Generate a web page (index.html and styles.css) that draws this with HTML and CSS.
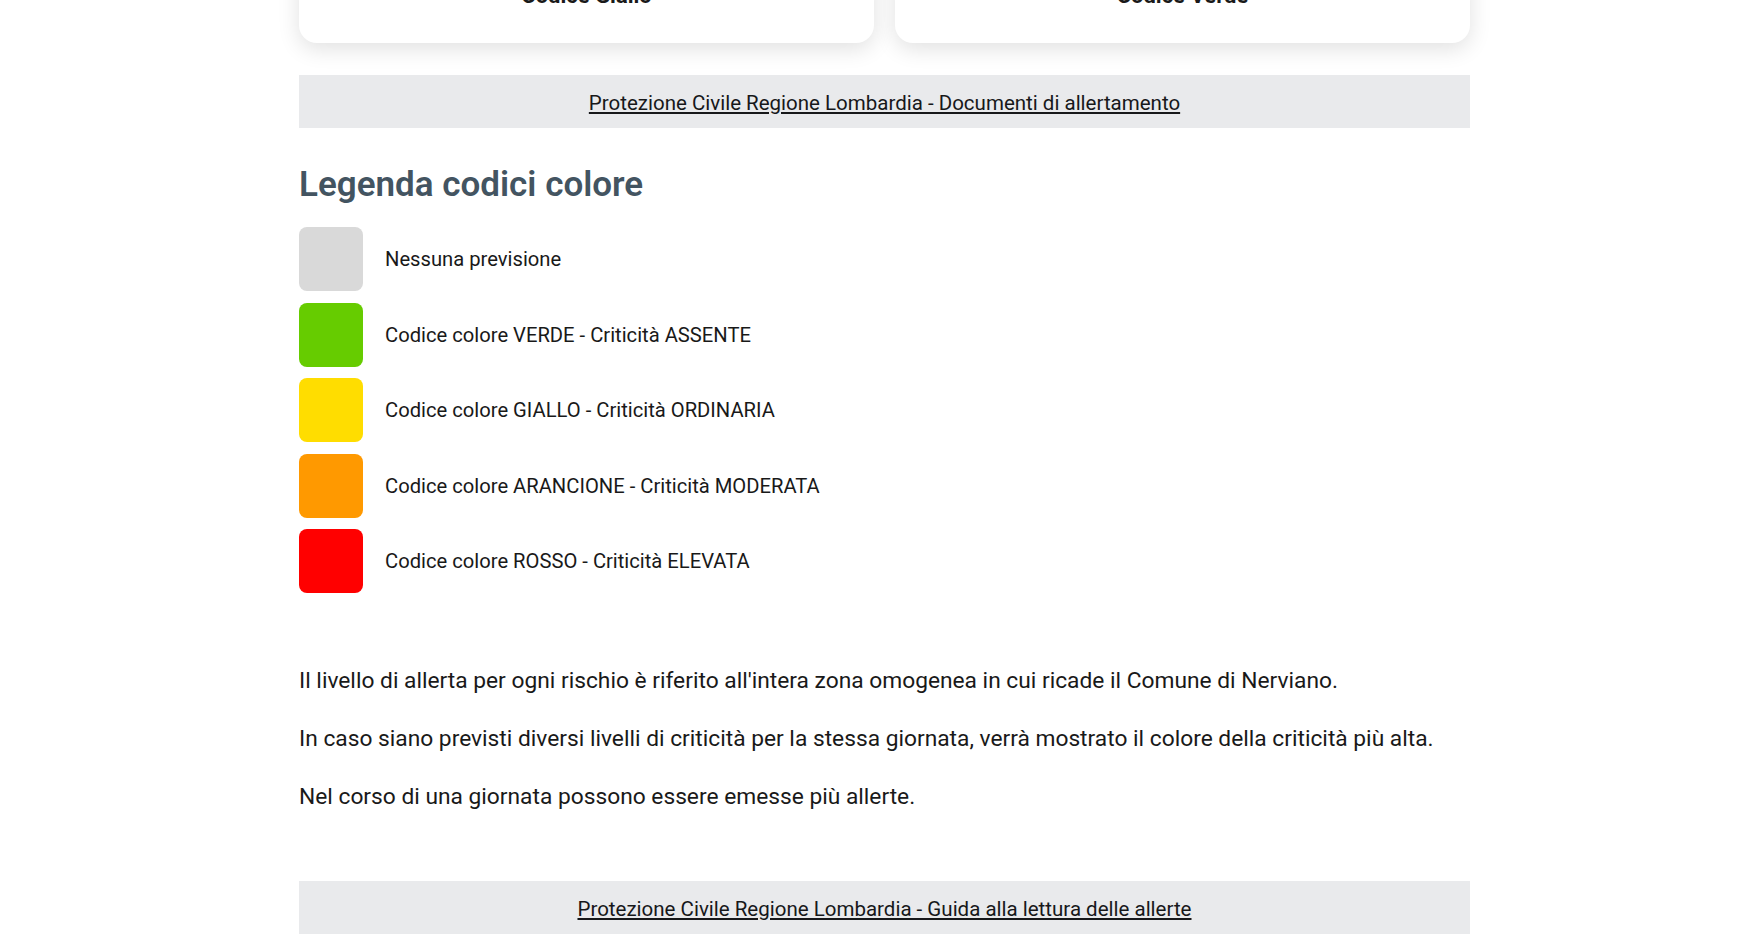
FILE: index.html
```html
<!DOCTYPE html>
<html lang="it">
<head>
  <meta charset="UTF-8">
  <title>Allerte meteo - Comune di Nerviano</title>
  <link rel="stylesheet" href="styles.css">
</head>
<body>

  <main class="page">

    <div class="cards">
      <div class="card">
        <h3 class="card-title">Codice Giallo</h3>
      </div>
      <div class="card">
        <h3 class="card-title">Codice Verde</h3>
      </div>
    </div>

    <div class="link-bar">
      <a href="#">Protezione Civile Regione Lombardia - Documenti di allertamento</a>
    </div>

    <h2 class="legend-title">Legenda codici colore</h2>

    <ul class="legend">
      <li><span class="swatch none"></span>Nessuna previsione</li>
      <li><span class="swatch green"></span>Codice colore VERDE - Criticità ASSENTE</li>
      <li><span class="swatch yellow"></span>Codice colore GIALLO - Criticità ORDINARIA</li>
      <li><span class="swatch orange"></span>Codice colore ARANCIONE - Criticità MODERATA</li>
      <li><span class="swatch red"></span>Codice colore ROSSO - Criticità ELEVATA</li>
    </ul>

    <div class="notes">
      <p>Il livello di allerta per ogni rischio è riferito all'intera zona omogenea in cui ricade il Comune di Nerviano.</p>
      <p>In caso siano previsti diversi livelli di criticità per la stessa giornata, verrà mostrato il colore della criticità più alta.</p>
      <p>Nel corso di una giornata possono essere emesse più allerte.</p>
    </div>

    <div class="link-bar">
      <a href="#">Protezione Civile Regione Lombardia - Guida alla lettura delle allerte</a>
    </div>

  </main>

</body>
</html>
```
FILE: styles.css
```css
* {
  box-sizing: border-box;
}

body {
  margin: 0;
  padding-left: 12px;
  font-family: Roboto, "Liberation Sans", sans-serif;
  font-size: 22.75px;
  color: #191919;
  background-color: #fff;
}

.page {
  max-width: 1171px;
  margin: 0 auto;
}

/* alert cards (only their lower edge is in view) */
.cards {
  display: grid;
  grid-template-columns: 1fr 1fr;
  gap: 21px;
  margin-top: -39px;
}

.card {
  background-color: #fff;
  border-radius: 18px;
  box-shadow: 0 6px 22px rgba(0, 0, 0, 0.12);
  padding: 20px 20px 32px;
  text-align: center;
}

.card-title {
  margin: 0;
  font-size: 22px;
  line-height: 30px;
  font-weight: 700;
  color: #1a1a1a;
}

/* grey strip with an external link */
.link-bar {
  background-color: #e9eaec;
  text-align: center;
  padding: 12px 20px 9px;
  font-size: 20.5px;
  line-height: 32px;
  margin-top: 32px;
}

.link-bar a {
  color: #17181a;
  text-decoration: underline;
  text-underline-offset: 2px;
}

.legend-title {
  margin: 36px 0 21px;
  font-size: 35px;
  line-height: 42px;
  font-weight: 600;
  color: #435461;
}

.legend {
  list-style: none;
  margin: 0;
  padding: 0;
  display: flex;
  flex-direction: column;
  gap: 11.5px;
  font-size: 20.2px;
}

.legend li {
  display: flex;
  align-items: center;
  gap: 22px;
}

.swatch {
  width: 64px;
  height: 64px;
  border-radius: 8px;
  flex-shrink: 0;
}

.swatch.none   { background-color: #d9d9d9; }
.swatch.green  { background-color: #66cc00; }
.swatch.yellow { background-color: #ffdd00; }
.swatch.orange { background-color: #ff9900; }
.swatch.red    { background-color: #ff0000; }

.notes {
  margin-top: 71px;
}

.notes p {
  margin: 0 0 24px;
  line-height: 34px;
}

.notes p:last-child {
  margin-bottom: 0;
}

.notes + .link-bar {
  margin-top: 67px;
}
```
